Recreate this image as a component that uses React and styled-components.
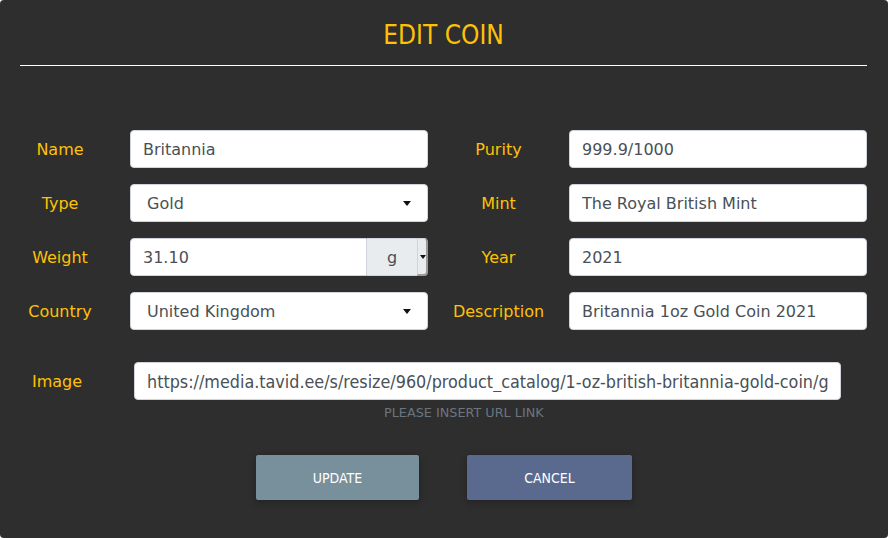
import React from "react";
import styled, { createGlobalStyle } from "styled-components";

const GlobalStyle = createGlobalStyle`
  html, body {
    margin: 0;
    padding: 0;
    background: #f8f9fa;
    font-family: "DejaVu Sans", sans-serif;
  }
`;

const Modal = styled.div`
  box-sizing: border-box;
  width: 888px;
  height: 538px;
  padding: 0 21px 0 20px;
  background: #2e2e2e;
  border-radius: 4px;
  overflow: hidden;
`;
const Title = styled.h2`
  margin: 0;
  padding-top: 20px;
  height: 30px;
  line-height: 30px;
  text-align: center;
  color: #ffc107;
  font-family: "DejaVu Sans Condensed", "DejaVu Sans", sans-serif;
  font-stretch: condensed;
  font-weight: 400;
  font-size: 26px;
`;
const Divider = styled.hr`
  margin: 15px 0 0;
  border: none;
  border-top: 1px solid #ffffff;
`;
const FieldGrid = styled.div`
  display: grid;
  grid-template-columns: 80px 298px 81px 298px;
  column-gap: 30px;
  row-gap: 16px;
  margin-top: 64px;
`;
const Label = styled.label`
  display: flex;
  align-items: center;
  justify-content: center;
  height: 38px;
  white-space: nowrap;
  color: #ffc107;
  font-size: 16px;
`;
const TextInput = styled.input`
  box-sizing: border-box;
  width: 100%;
  height: 38px;
  padding: 0 12px;
  border: 1px solid #ced4da;
  border-radius: 4px;
  background: #ffffff;
  color: #495057;
  font-family: ${(p) =>
    p.$condensed
      ? `"DejaVu Sans Condensed", "DejaVu Sans", sans-serif`
      : `"DejaVu Sans", sans-serif`};
  font-stretch: ${(p) => (p.$condensed ? "condensed" : "normal")};
  font-size: ${(p) => (p.$condensed ? 17.8 : 16)}px;
  outline: none;
`;
const SelectWrap = styled.div`
  position: relative;
  height: 38px;

  &::after {
    content: "";
    position: absolute;
    right: 17px;
    top: 17px;
    border-left: 4px solid transparent;
    border-right: 4px solid transparent;
    border-top: 5px solid #111111;
    pointer-events: none;
  }
`;
const Select = styled.select`
  box-sizing: border-box;
  width: 100%;
  height: 38px;
  padding: 0 12px 0 16px;
  appearance: none;
  border: 1px solid #ced4da;
  border-radius: 4px;
  background: #ffffff;
  color: #495057;
  font-family: "DejaVu Sans", sans-serif;
  font-size: 16px;
  outline: none;
`;
const InputGroup = styled.div`
  display: flex;
  height: 38px;

  & > input {
    flex: 1;
    border-radius: 4px 0 0 4px;
  }
`;
const UnitAddon = styled.div`
  box-sizing: border-box;
  display: flex;
  align-items: center;
  justify-content: center;
  width: 50px;
  height: 38px;
  border: 1px solid #ced4da;
  border-left: none;
  border-right: none;
  background: #e9ecef;
  color: #495057;
  font-size: 16px;
`;
const UnitArrow = styled.div`
  box-sizing: border-box;
  position: relative;
  width: 11px;
  height: 38px;
  border: 1px solid #ced4da;
  border-right: 2px solid #9a9a9a;
  border-bottom: 2px solid #9a9a9a;
  border-radius: 0 4px 4px 0;
  background: #e9ecef;

  &::after {
    content: "";
    position: absolute;
    left: 2px;
    top: 16px;
    border-left: 3px solid transparent;
    border-right: 3px solid transparent;
    border-top: 4px solid #111111;
  }
`;
const ImageRow = styled.div`
  display: grid;
  grid-template-columns: 74px 707px;
  column-gap: 40px;
  margin-top: 32px;
`;
const Helper = styled.small`
  display: block;
  margin: 5px 0 0 364px;
  color: #6c757d;
  font-size: 12.8px;
`;
const Actions = styled.div`
  display: flex;
  justify-content: center;
  gap: 48px;
  margin-top: 35px;
  padding-left: 1px;
`;
const Button = styled.button`
  width: ${(p) => p.$width}px;
  height: 45px;
  border: none;
  border-radius: 2px;
  background: ${(p) => p.$bg};
  color: #ffffff;
  font-family: "DejaVu Sans Condensed", "DejaVu Sans", sans-serif;
  font-stretch: condensed;
  font-size: 14px;
  box-shadow: 0 2px 5px rgba(0, 0, 0, 0.16), 0 2px 10px rgba(0, 0, 0, 0.12);
  cursor: pointer;
`;

export default function App() {
  return (
    <>
      <GlobalStyle />
      <Modal>
        <Title>EDIT COIN</Title>
        <Divider />
        <FieldGrid>
          <Label>Name</Label>
          <TextInput defaultValue="Britannia" />
          <Label>Purity</Label>
          <TextInput defaultValue="999.9/1000" />

          <Label>Type</Label>
          <SelectWrap>
            <Select defaultValue="Gold">
              <option>Gold</option>
              <option>Silver</option>
            </Select>
          </SelectWrap>
          <Label>Mint</Label>
          <TextInput defaultValue="The Royal British Mint" />

          <Label>Weight</Label>
          <InputGroup>
            <TextInput defaultValue="31.10" />
            <UnitAddon>g</UnitAddon>
            <UnitArrow />
          </InputGroup>
          <Label>Year</Label>
          <TextInput defaultValue="2021" />

          <Label>Country</Label>
          <SelectWrap>
            <Select defaultValue="United Kingdom">
              <option>United Kingdom</option>
              <option>Canada</option>
            </Select>
          </SelectWrap>
          <Label>Description</Label>
          <TextInput defaultValue="Britannia 1oz Gold Coin 2021" />
        </FieldGrid>
        <ImageRow>
          <Label>Image</Label>
          <TextInput
            $condensed
            defaultValue="https://media.tavid.ee/s/resize/960/product_catalog/1-oz-british-britannia-gold-coin/gold-coin.jpg"
          />
        </ImageRow>
        <Helper>PLEASE INSERT URL LINK</Helper>
        <Actions>
          <Button $width={163} $bg="#78909c">UPDATE</Button>
          <Button $width={165} $bg="#5a6a8e">CANCEL</Button>
        </Actions>
      </Modal>
    </>
  );
}
